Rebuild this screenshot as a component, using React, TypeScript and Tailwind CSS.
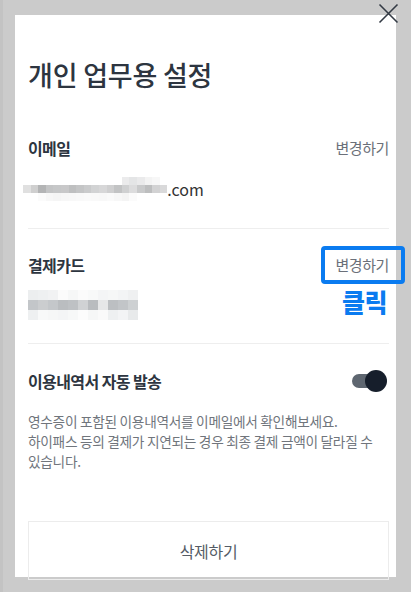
const EMAIL_BLUR: string[][] = [
  ['#ffffff', '#ffffff', '#ffffff', '#ffffff', '#ffffff', '#ffffff', '#ffffff', '#ffffff', '#ffffff', '#ffffff', '#ffffff', '#ffffff', '#ffffff', '#ebebec', '#e4e5e6', '#eaeaeb', '#f3f3f3', '#f7f7f7', '#ffffff'],
  ['#e0e0e0', '#cfcfcf', '#b3b4b5', '#c3c4c5', '#c6c7c8', '#c8c8c9', '#bebfc0', '#c4c5c6', '#cacbcc', '#d2d3d4', '#d7d7d8', '#cfcfd0', '#c2c3c4', '#cfd0d1', '#dcdcdd', '#c9cacb', '#bdbebf', '#d2d2d3', '#d9d9da'],
  ['#ffffff', '#ffffff', '#fbfbfb', '#f7f7f7', '#f5f5f5', '#f7f7f7', '#f8f8f8', '#f9f9f9', '#fafafa', '#f9f9f9', '#f8f8f8', '#fafafa', '#f7f7f7', '#f4f4f4', '#fbfbfb', '#ffffff', '#ffffff', '#ffffff', '#ffffff'],
];

const CARD_BLUR: string[][] = [
  ['#eceeef', '#eef0f1', '#f1f2f3', '#fbfbfb', '#f6f7f7', '#fbfbfb', '#f8f9f9', '#f4f5f6', '#f6f7f7', '#f3f4f5', '#eff0f1'],
  ['#c3c6c9', '#cbcdcf', '#c4c7ca', '#babdc0', '#bec1c4', '#d0d2d4', '#b9bcbf', '#e6e7e8', '#bcbfc2', '#c2c5c8', '#cdd0d2'],
  ['#eef0f1', '#f8f9f9', '#f6f7f7', '#f4f5f6', '#f7f8f8', '#fcfcfc', '#f6f7f7', '#fafafa', '#eef0f1', '#f3f4f5', '#e8eaeb'],
];

function Blur({ rows, cell }: { rows: string[][]; cell: string }) {
  return (
    <div className="flex flex-col">
      {rows.map((row, i) => (
        <div key={i} className="flex">
          {row.map((c, j) => (
            <div key={j} className={cell} style={{ backgroundColor: c }} />
          ))}
        </div>
      ))}
    </div>
  );
}

export default function App() {
  return (
    <div
      className="relative min-h-[592px] w-[411px] overflow-hidden border-l-[3px] border-[#c3c3c3] bg-[#cbcbcb] pl-[12px] pr-[15px] pt-[15px]"
      style={{ fontFamily: '"Noto Sans CJK KR", "Noto Sans", sans-serif' }}
    >
      <button type="button" aria-label="닫기" className="absolute left-[375px] top-[3px] text-[#333a44]">
        <svg width="21" height="21" viewBox="0 0 21 21" fill="none" stroke="currentColor" strokeWidth="1.6">
          <path d="M1.5 1.5L19.5 19.5M19.5 1.5L1.5 19.5" />
        </svg>
      </button>

      <div className="flex h-[562px] flex-col bg-white pl-[13px] pr-[7px]">
        <h1 className="pt-[43px] text-[27px] leading-[34px] font-medium tracking-[-0.2px] text-[#2d3540]">
          개인 업무용 설정
        </h1>

        {/* 이메일 */}
        <section className="border-b border-[#eeeeee] pb-[27px] pt-[45px]">
          <div className="flex items-center justify-between leading-[22px]">
            <span className="text-[16px] font-bold tracking-[-0.6px] text-[#2d3540]">이메일</span>
            <span className="text-[15px] tracking-[-0.4px] text-[#6b7079]">변경하기</span>
          </div>
          <div className="mt-[18px] -ml-[5px] flex items-center">
            <Blur rows={EMAIL_BLUR} cell="h-[8px] w-[7.6px]" />
            <span className="text-[16px] leading-[22px] text-[#333]">.com</span>
          </div>
        </section>

        {/* 결제카드 */}
        <section className="border-b border-[#eeeeee] pb-[23px] pt-[25px]">
          <div className="relative flex items-center justify-between leading-[22px]">
            <span className="text-[16px] font-bold tracking-[-0.6px] text-[#2d3540]">결제카드</span>
            <span className="text-[15px] tracking-[-0.4px] text-[#6b7079]">변경하기</span>
            <div className="absolute right-[-16px] top-[-8px] h-[38px] w-[84px] rounded-[4px] border-4 border-[#0a7bf0]" />
            <span className="absolute right-[2px] top-[33px] text-[25px] leading-[28px] font-black tracking-[-0.5px] text-[#0a7bf0]">
              클릭
            </span>
          </div>
          <div className="mt-[14px]">
            <Blur rows={CARD_BLUR} cell="h-[10px] w-[10px]" />
          </div>
        </section>

        {/* 이용내역서 */}
        <section className="pt-[26px]">
          <div className="flex items-center justify-between leading-[22px]">
            <span className="text-[16px] font-bold tracking-[-0.6px] text-[#2d3540]">이용내역서 자동 발송</span>
            <div className="relative mr-[2px] h-[22px] w-[35px]">
              <div className="absolute left-0 top-[4px] h-[14px] w-[28px] rounded-full bg-[#5e6670]" />
              <div className="absolute right-0 top-0 h-[22px] w-[22px] rounded-full bg-[#161e2b]" />
            </div>
          </div>
          <p className="mt-[19px] break-keep text-[13.7px] leading-[20px] tracking-[-0.3px] text-[#70757c]">
            영수증이 포함된 이용내역서를 이메일에서 확인해보세요.
            <br />
            하이패스 등의 결제가 지연되는 경우 최종 결제 금액이 달라질 수 있습니다.
          </p>
        </section>

        <button
          type="button"
          className="mt-[50px] h-[59px] shrink-0 border border-[#ececec] text-[16px] tracking-[-0.3px] text-[#555c66]"
        >
          삭제하기
        </button>
      </div>
    </div>
  );
}
